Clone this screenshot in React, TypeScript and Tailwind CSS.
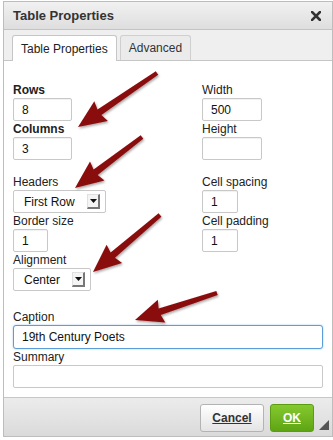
import React from "react";

type Pt = [number, number];

// skitch-style arrow: tapered shaft + triangular head
const arrowPoints = (tail: Pt, tip: Pt) => {
  const dx = tail[0] - tip[0];
  const dy = tail[1] - tip[1];
  const len = Math.sqrt(dx * dx + dy * dy);
  const ux = dx / len;
  const uy = dy / len;
  const px = -uy;
  const py = ux;
  const head = 28;
  const hw = 12;
  const bx = tip[0] + ux * head;
  const by = tip[1] + uy * head;
  const shaft = 3.4;
  const pts: Pt[] = [
    tip,
    [bx + px * hw, by + py * hw],
    [bx + px * shaft + ux * -2, by + py * shaft + uy * -2],
    [tail[0] + px * 2.2, tail[1] + py * 2.2],
    [tail[0] - px * 2.2, tail[1] - py * 2.2],
    [bx - px * shaft + ux * -2, by - py * shaft + uy * -2],
    [bx - px * hw, by - py * hw],
  ];
  return pts.map((p) => `${p[0].toFixed(1)},${p[1].toFixed(1)}`).join(" ");
};

const arrows: [Pt, Pt][] = [
  [[157, 73], [78, 127]],
  [[142, 137], [75, 188]],
  [[160, 215], [93, 272]],
  [[217, 293], [135, 320]],
];

const Field = ({
  label,
  value,
  width,
  bold,
}: {
  label: string;
  value?: string;
  width: string;
  bold?: boolean;
}) => (
  <div className="flex flex-col">
    <div className={`h-4 leading-4 text-[12px] text-[#222] ${bold ? "font-bold" : ""}`}>
      {label}
    </div>
    <div
      className={`${width} h-[23px] border border-[#c8c8c8] rounded-[2px] bg-white shadow-[inset_0_1px_1px_rgba(0,0,0,0.06)] flex items-center pl-[8px] text-[12px] text-[#111]`}
    >
      {value}
    </div>
  </div>
);

const SelectBox = ({ label, value, width }: { label: string; value: string; width: string }) => (
  <div className="flex flex-col">
    <div className="h-4 leading-4 text-[12px] text-[#222]">{label}</div>
    <div
      className={`${width} h-[23px] border border-[#c8c8c8] rounded-[2px] bg-white flex items-center justify-between pl-[10px] pr-[5px] text-[12px] text-[#111]`}
    >
      <span>{value}</span>
      <div className="w-[13px] h-[15px] bg-[#f4f4f4] border-t border-l border-[#e0e0e0] border-r-2 border-b-2 border-r-[#777] border-b-[#777] flex items-center justify-center">
        <svg width="7" height="4" viewBox="0 0 7 4">
          <path d="M0 0 L7 0 L3.5 4 Z" fill="#111" />
        </svg>
      </div>
    </div>
  </div>
);

const App = () => {
  return (
    <div
      className="relative w-[333px] h-[440px] overflow-hidden bg-white"
      style={{ fontFamily: '"Liberation Sans", Arial, sans-serif' }}
    >
      <div className="ml-[3px] mt-[1px] w-[330px] border border-[#bdbdbd] flex flex-col">
        {/* title bar */}
        <div className="h-[28px] bg-gradient-to-b from-[#f1f1f1] to-[#dedede] border-b border-[#c4c4c4] flex items-center justify-between pl-[9px] pr-[11px]">
          <span className="text-[13px] font-bold text-[#333]">Table Properties</span>
          <svg width="10" height="10" viewBox="0 0 10 10">
            <path d="M1 1 L9 9 M9 1 L1 9" stroke="#333" strokeWidth="2.6" strokeLinecap="square" />
          </svg>
        </div>

        {/* tabs */}
        <div className="h-[31px] bg-[#efefef] border-b border-[#c6c6c6] flex items-end gap-[3px] pl-[8px]">
          <div className="h-[26px] -mb-px bg-white border border-b-0 border-[#c6c6c6] rounded-t-[3px] px-[8px] flex items-center text-[12px] text-[#222]">
            Table Properties
          </div>
          <div className="h-[25px] bg-[#ebebeb] border border-b-0 border-[#cfcfcf] rounded-t-[3px] px-[8px] flex items-center text-[12px] text-[#333]">
            Advanced
          </div>
        </div>

        {/* body */}
        <div className="bg-white pl-[9px] pr-[9px] pt-[21px] pb-[9px]">
          <div className="grid grid-cols-[189px_1fr]">
            <div className="flex flex-col">
              <Field label="Rows" value="8" width="w-[59px]" bold />
              <Field label="Columns" value="3" width="w-[59px]" bold />
              <div className="mt-[14px]">
                <SelectBox label="Headers" value="First Row" width="w-[93px]" />
              </div>
              <Field label="Border size" value="1" width="w-[35px]" />
              <SelectBox label="Alignment" value="Center" width="w-[78px]" />
            </div>
            <div className="flex flex-col">
              <Field label="Width" value="500" width="w-[60px]" />
              <Field label="Height" width="w-[60px]" />
              <div className="mt-[14px]">
                <Field label="Cell spacing" value="1" width="w-[36px]" />
              </div>
              <Field label="Cell padding" value="1" width="w-[36px]" />
            </div>
          </div>

          <div className="mt-[18px] flex flex-col">
            <div className="h-4 leading-4 text-[12px] text-[#222]">Caption</div>
            <div className="h-[24px] border border-[#5b9dd9] rounded-[3px] bg-white flex items-center pl-[8px] text-[12px] text-[#111] shadow-[0_0_2px_rgba(91,157,217,0.6)]">
              19th Century Poets
            </div>
            <div className="h-4 leading-4 text-[12px] text-[#222]">Summary</div>
            <div className="h-[23px] border border-[#c8c8c8] rounded-[2px] bg-white" />
          </div>
        </div>

        {/* footer */}
        <div className="relative h-[39px] border-t border-[#c6c6c6] bg-gradient-to-b from-[#ececec] to-[#dadada] flex items-center justify-end gap-[6px] pr-[18px] pt-[1px]">
          <button className="w-[64px] h-[28px] rounded-[3px] border border-[#b3b3b3] bg-gradient-to-b from-white to-[#e4e4e4] text-[12px] font-bold text-[#333] underline">
            Cancel
          </button>
          <button className="w-[44px] h-[28px] rounded-[3px] border border-[#5c9c12] bg-gradient-to-b from-[#86c92f] to-[#5ea513] text-[12px] font-bold text-white underline">
            OK
          </button>
          <svg className="absolute right-[3px] bottom-[6px]" width="10" height="10" viewBox="0 0 10 10">
            <path d="M10 0 L10 10 L0 10 Z" fill="#555" />
          </svg>
        </div>
      </div>

      {/* annotation arrows */}
      <svg className="absolute left-0 top-0 pointer-events-none" width="333" height="440">
        <defs>
          <filter id="sh" x="-20%" y="-20%" width="140%" height="140%">
            <feDropShadow dx="1" dy="1.5" stdDeviation="1.2" floodColor="#000" floodOpacity="0.35" />
          </filter>
        </defs>
        {arrows.map(([tail, tip], i) => (
          <polygon key={i} points={arrowPoints(tail, tip)} fill="#8a0d0d" filter="url(#sh)" />
        ))}
      </svg>
    </div>
  );
};

export default App;
